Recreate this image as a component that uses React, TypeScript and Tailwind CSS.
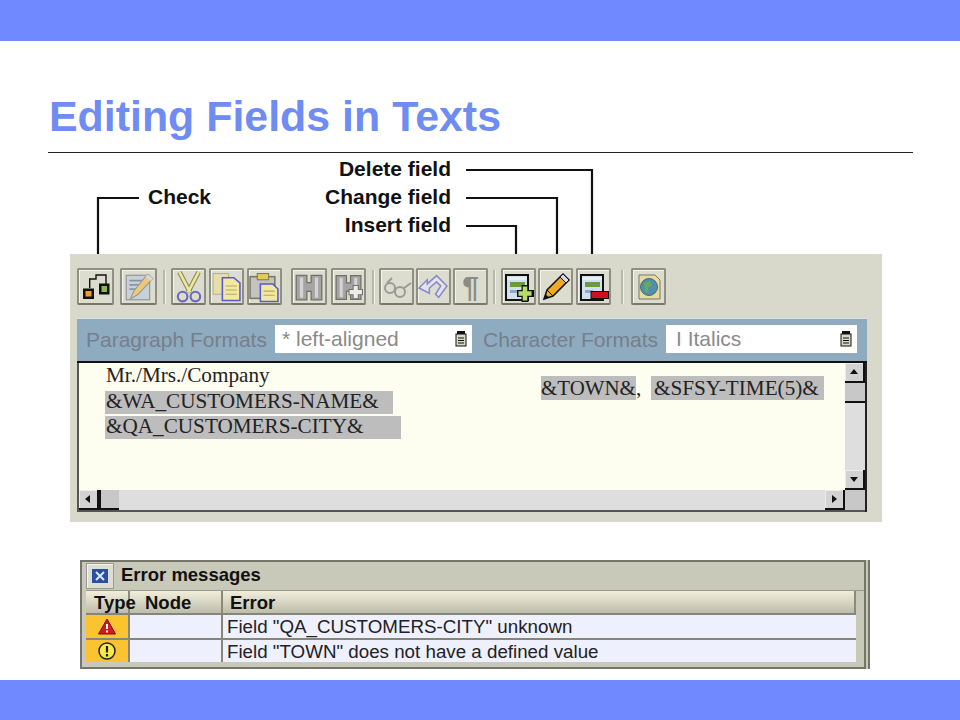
import type { ReactNode } from "react";

const SANS = "font-['Liberation_Sans',Arial,sans-serif]";
const SERIF = "font-['Liberation_Serif','Times_New_Roman',serif]";

const Btn = ({ children, className = "" }: { children: ReactNode; className?: string }) => (
  <div className={`flex h-[37px] w-[35px] shrink-0 items-center justify-center rounded-[2px] border-2 border-[#8f8f83] border-b-[#77776c] bg-[#dcdccf] shadow-[inset_1px_1px_0_#f4f4ea] ${className}`}>
    {children}
  </div>
);

const Sep = ({ className = "" }: { className?: string }) => (
  <div className={`h-[34px] w-[3px] shrink-0 bg-[#b7b7aa] border-r border-[#f1f1e8] ${className}`} />
);

const Hierarchy = () => (
  <svg width="30" height="30" viewBox="0 0 30 30">
    <path d="M8.7 16V7H15V3H25V12" fill="none" stroke="#111" strokeWidth="1.4" />
    <rect x="2" y="16.5" width="11" height="10.5" fill="#111" />
    <rect x="4.5" y="19" width="6" height="5.5" fill="#f0a020" />
    <rect x="18" y="11.5" width="10.5" height="11" fill="#111" />
    <rect x="20.5" y="14" width="5.5" height="6" fill="#8fb84a" />
  </svg>
);

const EditPage = () => (
  <svg width="32" height="32" viewBox="0 0 30 30">
    <rect x="3" y="4" width="22" height="23" fill="#c8d0d8" stroke="#8a8f98" />
    <path d="M6 9h14M6 13h10M6 17h7" stroke="#8a94a6" strokeWidth="1.5" />
    <path d="M7 26l3-7L23 3l5 4-14 15z" fill="#eec87a" stroke="#9a9a8c" />
    <path d="M23 3l5 4-2 2.5-5-4z" fill="#d8d8d8" />
  </svg>
);

const Scissors = () => (
  <svg width="30" height="34" viewBox="0 0 28 32">
    <path d="M5 2l10 19M23 2L13 21" stroke="#8c8c5a" strokeWidth="4.5" fill="none" />
    <path d="M5 2l10 19M23 2L13 21" stroke="#ece8a0" strokeWidth="2.4" fill="none" />
    <circle cx="8" cy="25" r="4.5" fill="none" stroke="#6a68b8" strokeWidth="2" />
    <circle cx="20" cy="25" r="4.5" fill="none" stroke="#6a68b8" strokeWidth="2" />
  </svg>
);

const Copy = () => (
  <svg width="32" height="32" viewBox="0 0 30 30">
    <rect x="2" y="2" width="15" height="20" fill="#e8dfa8" stroke="#b0b0a0" />
    <path d="M11 6h11l6 5v17H11z" fill="#f1e9a0" stroke="#5a58d0" strokeWidth="1.5" />
    <path d="M14 14h11M14 18h11M14 22h11" stroke="#b5a860" />
  </svg>
);

const Paste = () => (
  <svg width="32" height="32" viewBox="0 0 30 30">
    <rect x="1" y="5" width="24" height="21" fill="#c4c4bc" stroke="#77776c" strokeWidth="1.5" />
    <rect x="8" y="2" width="11" height="6" fill="#e8c860" stroke="#77776c" />
    <path d="M11 12h12l5 5v12H11z" fill="#f1e9a0" stroke="#5a58d0" strokeWidth="1.5" />
    <path d="M14 19h11M14 23h11" stroke="#b5a860" />
  </svg>
);

const Binoculars = ({ plus = false }: { plus?: boolean }) => (
  <svg width="32" height="32" viewBox="0 0 30 30">
    <path d="M3 4h10v7h4V4h10v23H17v-8h-4v8H3z" fill="#a4a4a4" stroke="#707068" strokeWidth="1.2" />
    <path d="M8 6v19M22 6v19" stroke="#d4d4d4" strokeWidth="3" />
    {plus && (
      <>
        <path d="M22 13v14M15 20h14" stroke="#707068" strokeWidth="6" />
        <path d="M22 14v12M16 20h12" stroke="#ececec" strokeWidth="4" />
      </>
    )}
  </svg>
);

const Glasses = () => (
  <svg width="30" height="26" viewBox="0 0 30 26">
    <circle cx="8" cy="14" r="5" fill="none" stroke="#9a9a96" strokeWidth="2" />
    <circle cx="18" cy="18" r="5" fill="none" stroke="#9a9a96" strokeWidth="2" />
    <path d="M5 9l5-5M22 14l7-5M12 14l2 1" stroke="#9a9a96" strokeWidth="2" fill="none" />
  </svg>
);

const Pretty = () => (
  <svg width="32" height="32" viewBox="0 0 30 30">
    <path d="M1 16l8-8v4l9-8 10 10-8 11-3-3 5-8-4-4-7 6v5z" fill="#e4e4ee" stroke="#8a88c8" strokeWidth="1.5" />
  </svg>
);

const FieldDoc = ({ children }: { children: ReactNode }) => (
  <svg width="30" height="30" viewBox="0 0 30 30">
    <rect x="2" y="3" width="22" height="25" fill="#cfe0ee" stroke="#111" strokeWidth="2" />
    <rect x="3.5" y="5" width="19" height="3" fill="#e8eef4" />
    <rect x="6" y="10" width="15" height="5" fill="#6f9a3c" />
    <rect x="6" y="18" width="8" height="3" fill="#8fa8c8" />
    {children}
  </svg>
);

const Pencil = () => (
  <svg width="30" height="30" viewBox="0 0 30 30">
    <path d="M3 27l3-9L22 2l6 6-16 16z" fill="#f0a828" stroke="#111" strokeWidth="1.5" />
    <path d="M6 18l6 6" stroke="#111" />
    <path d="M22 2l6 6-3 3-6-6z" fill="#d8dce8" stroke="#111" />
    <path d="M3 27l1.5-5 3.5 3.5z" fill="#111" />
  </svg>
);

const Globe = () => (
  <svg width="30" height="32" viewBox="0 0 30 32">
    <path d="M5 4h16l5 5v19H5z" fill="#e6dca0" stroke="#77776c" />
    <circle cx="15" cy="16" r="8.5" fill="#4f8fb0" stroke="#4a6a78" />
    <path d="M10 12l6-2 2 4-4 3 1 5-4-2z" fill="#6aa85a" />
  </svg>
);

const Dropdown = () => (
  <svg width="12" height="16" viewBox="0 0 12 16">
    <rect x="2" y="0" width="8" height="3" fill="#111" />
    <rect x="1" y="3" width="10" height="12" fill="#d8d8c8" stroke="#111" />
    <path d="M3 7h6M3 9.5h6M3 12h6" stroke="#111" />
  </svg>
);

const ScrollBtn = ({ dir, className = "" }: { dir: "up" | "down" | "left" | "right"; className?: string }) => {
  const shape = {
    up: "M1 7l4-5 4 5z",
    down: "M1 3l4 5 4-5z",
    left: "M7 1L2 5l5 4z",
    right: "M3 1l5 4-5 4z",
  }[dir];
  return (
    <div className={`flex shrink-0 items-center justify-center border-b-2 border-r-2 border-[#111] bg-[#d2d2d2] shadow-[inset_1px_1px_0_#ececec] ${className}`}>
      <svg width="10" height="10" viewBox="0 0 10 10">
        <path d={shape} fill="#111" />
      </svg>
    </div>
  );
};

const FormatField = ({ label, value, labelW, inputW }: { label: string; value: string; labelW: string; inputW: string }) => (
  <>
    <span className={`shrink-0 text-[21px] leading-none text-[#75808c] ${labelW}`}>{label}</span>
    <div className={`flex h-[28px] shrink-0 items-center justify-between bg-white pr-[5px] text-[21px] text-[#8a8a8a] ${inputW}`}>
      <span>{value}</span>
      <Dropdown />
    </div>
  </>
);

const Callouts = () => (
  <div className="relative h-[101px] shrink-0">
    <svg className="absolute left-0 top-0" width="960" height="101" viewBox="0 153 960 101">
      <path d="M98 255V198H139M466 170H592V255M466 198H557V255M466 226H516V255" fill="none" stroke="#111" strokeWidth="2.2" />
    </svg>
    <span className="absolute left-[148px] top-[32px] text-[21px] leading-[24px] font-bold text-[#111]">Check</span>
    <span className="absolute right-[509px] top-[4px] text-[21px] leading-[24px] font-bold text-[#111]">Delete field</span>
    <span className="absolute right-[509px] top-[32px] text-[21px] leading-[24px] font-bold text-[#111]">Change field</span>
    <span className="absolute right-[509px] top-[60px] text-[21px] leading-[24px] font-bold text-[#111]">Insert field</span>
  </div>
);

const HeaderCell = ({ children, className = "" }: { children?: ReactNode; className?: string }) => (
  <div className={`flex h-[22px] shrink-0 items-center border-r-2 border-[#8b8b7c] pt-px text-[18.5px] font-bold text-[#111] ${className}`}>
    {children}
  </div>
);

const ErrorRow = ({ icon, text, className = "" }: { icon: ReactNode; text: string; className?: string }) => (
  <div className={`flex border-t-2 border-[#85857a] ${className}`}>
    <div className="flex w-[44px] shrink-0 items-center justify-center border-r-2 border-[#85857a] bg-[#fbc32f]">{icon}</div>
    <div className="w-[93px] shrink-0 border-r-2 border-[#85857a] bg-[#eef0fd]" />
    <div className="flex-1 truncate bg-[#eef0fd] pl-[4px] text-[18.75px] leading-[23px] text-[#222]">{text}</div>
  </div>
);

export default function App() {
  return (
    <div className={`flex h-[720px] w-[960px] flex-col overflow-hidden bg-white ${SANS}`}>
      <div className="h-[41px] shrink-0 bg-[#7189ff]" />

      <h1 className="ml-[49px] mt-[49px] h-[62px] shrink-0 text-[42.9px] leading-[52px] font-bold text-[#6f8cf2]">
        Editing Fields in Texts
      </h1>
      <div className="mx-[48px] mr-[47px] h-px shrink-0 bg-[#222]" />

      <Callouts />

      {/* SAP editor */}
      <div className="ml-[70px] flex h-[268px] w-[812px] shrink-0 flex-col bg-[#d9d9cb] pb-[10px] pl-[7px] pr-[15px]">
        <div className="flex h-[64px] shrink-0 items-center pt-px">
          <Btn className="w-[37px]"><Hierarchy /></Btn>
          <Btn className="ml-[6px] w-[37px]"><EditPage /></Btn>
          <Sep className="ml-[6px]" />
          <Btn className="ml-[5px]"><Scissors /></Btn>
          <Btn className="ml-[3px]"><Copy /></Btn>
          <Btn className="ml-[3px]"><Paste /></Btn>
          <Btn className="ml-[9px] w-[36px]"><Binoculars /></Btn>
          <Btn className="ml-[4px]"><Binoculars plus /></Btn>
          <Sep className="ml-[6px]" />
          <Btn className="ml-[4px]"><Glasses /></Btn>
          <Btn className="ml-[2px]"><Pretty /></Btn>
          <Btn className="ml-[2px]"><span className={`text-[30px] leading-none font-bold text-[#8c8c84] ${SANS}`}>¶</span></Btn>
          <Sep className="ml-[5px]" />
          <Btn className="ml-[5px]">
            <FieldDoc>
              <path d="M21 13v17M13 21.5h17" stroke="#111" strokeWidth="7" />
              <path d="M21 14.5v14M14.5 21.5h13" stroke="#b8dc68" strokeWidth="4.5" />
            </FieldDoc>
          </Btn>
          <Btn className="ml-[2px]"><Pencil /></Btn>
          <Btn className="ml-[3px]">
            <FieldDoc>
              <rect x="12" y="19.5" width="17.5" height="7" fill="#d0101c" stroke="#111" />
            </FieldDoc>
          </Btn>
          <Sep className="ml-[10px]" />
          <Btn className="ml-[7px]"><Globe /></Btn>
        </div>

        <div className="flex h-[43px] shrink-0 items-center border-t border-[#cfe0e6] bg-[#8fabbf] pb-[2px] pl-[9px]">
          <FormatField label="Paragraph Formats" value="* left-aligned" labelW="w-[189px]" inputW="w-[197px] pl-[7px]" />
          <div className="w-[11px] shrink-0" />
          <FormatField label="Character Formats" value="I Italics" labelW="w-[183px]" inputW="w-[191px] pl-[10px]" />
        </div>

        <div className={`flex min-h-0 flex-1 border-t-2 border-[#111] bg-[#fdfdf0] ${SERIF} text-[21.2px] text-[#222]`}>
          <div className="flex min-w-0 flex-1 flex-col border-l-2 border-[#555]">
            <div className="flex min-h-0 flex-1 pl-[26px] pt-[2px]">
              <div className="w-[436px] shrink-0">
                <div className="h-[26px] pl-px leading-[20px]">Mr./Mrs./Company</div>
                <div className="mb-[2px] h-[23px] w-[288px] bg-[#bdbdbd] pl-px leading-[21px]">&amp;WA_CUSTOMERS-NAME&amp;</div>
                <div className="h-[23px] w-[296px] bg-[#bdbdbd] pl-px leading-[21px]">&amp;QA_CUSTOMERS-CITY&amp;</div>
              </div>
              <div className="mt-[11px] flex h-[24px] items-start leading-[24px]">
                <span className="w-[95px] whitespace-nowrap bg-[#bdbdbd] text-[20.9px]">&amp;TOWN&amp;</span>
                <span className="w-[15px]">,</span>
                <span className="w-[173px] whitespace-nowrap bg-[#bdbdbd] pl-[3px]">&amp;SFSY-TIME(5)&amp;</span>
              </div>
            </div>
            <div className="flex h-[22px] shrink-0 border-b-2 border-[#555] bg-[#dedede]">
              <ScrollBtn dir="left" className="w-[20px]" />
              <div className="h-full w-[20px] shrink-0 border-b-2 border-[#111] border-l-2 bg-[#c8c8c8]" />
              <div className="flex-1" />
              <ScrollBtn dir="right" className="w-[20px]" />
            </div>
          </div>
          <div className="flex w-[22px] shrink-0 flex-col border-r-2 border-[#222] bg-[#dedede]">
            <ScrollBtn dir="up" className="h-[20px]" />
            <div className="h-[20px] shrink-0 border-b-2 border-[#111] bg-[#c8c8c8]" />
            <div className="flex-1" />
            <ScrollBtn dir="down" className="h-[20px]" />
            <div className="h-[22px] shrink-0 border-b-2 border-[#555] bg-[#c8c8c8]" />
          </div>
        </div>
      </div>

      {/* Error messages */}
      <div className="ml-[80px] mt-[38px] flex h-[109px] w-[790px] shrink-0">
        <div className="flex min-w-0 flex-1 flex-col border-y-2 border-l-2 border-[#75756a] bg-[#c9c9b9] pl-[4px]">
          <div className="flex h-[29px] shrink-0 items-center gap-[7px] border-b border-[#9a9a8c]">
            <div className="flex h-[26px] w-[28px] items-center justify-center border border-[#999] bg-[#ddddd2] shadow-[inset_1px_1px_0_#f4f4ea]">
              <svg width="16" height="14" viewBox="0 0 16 14">
                <rect width="16" height="14" fill="#2a4fa0" />
                <path d="M4 3l8 8M12 3l-8 8" stroke="#dfe8f8" strokeWidth="2" />
              </svg>
            </div>
            <span className="pb-[2px] text-[18.5px] font-bold text-[#111]">Error messages</span>
          </div>
          <div className="w-[770px]">
            <div className="flex bg-gradient-to-b from-[#f2eedc] to-[#bdbdab]">
              <HeaderCell className="w-[44px] pl-[8px]"><span className="whitespace-nowrap">Type</span></HeaderCell>
              <HeaderCell className="w-[93px] pl-[15px]">Node</HeaderCell>
              <HeaderCell className="flex-1 pl-[7px]">Error</HeaderCell>
            </div>
            <ErrorRow
              className="h-[25px]"
              text={'Field "QA_CUSTOMERS-CITY" unknown'}
              icon={
                <svg width="20" height="18" viewBox="0 0 20 18">
                  <path d="M10 1l8.5 15H1.5z" fill="#d81820" stroke="#701018" strokeLinejoin="round" />
                  <path d="M10 6v5M10 12.5v2" stroke="#fff" strokeWidth="2" />
                </svg>
              }
            />
            <ErrorRow
              className="h-[24px]"
              text={'Field "TOWN" does not have a defined value'}
              icon={
                <svg width="20" height="20" viewBox="0 0 20 20">
                  <circle cx="10" cy="10" r="8" fill="#f8e848" stroke="#222" strokeWidth="1.5" />
                  <path d="M10 5v6.5M10 13v2.5" stroke="#222" strokeWidth="2.2" />
                </svg>
              }
            />
          </div>
        </div>
        <div className="w-[6px] shrink-0 border-x-2 border-[#75756a] bg-[#c9c9b9]" />
      </div>

      <div className="mt-auto h-[40px] shrink-0 bg-[#7189ff]" />
    </div>
  );
}
